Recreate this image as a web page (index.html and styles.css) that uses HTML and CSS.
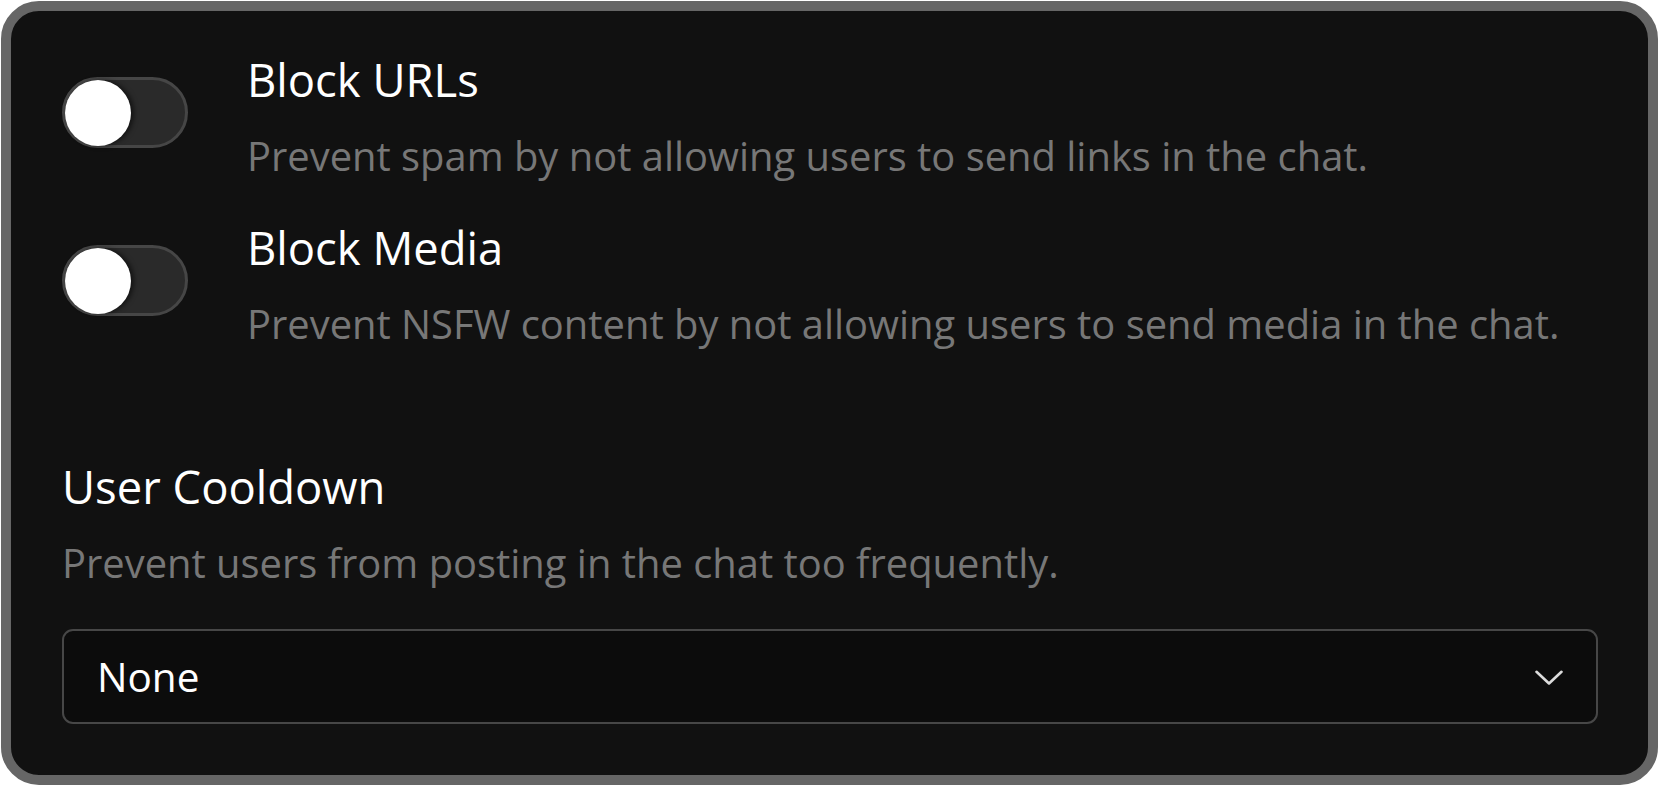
FILE: index.html
```html
<!DOCTYPE html>
<html lang="en">
<head>
<meta charset="utf-8">
<title>Chat moderation settings</title>
<link rel="stylesheet" href="styles.css">
</head>
<body>
<div class="card">
  <div class="setting-row">
    <div class="toggle" role="switch" aria-checked="false"><span class="knob"></span></div>
    <div class="setting-text">
      <div class="setting-title">Block URLs</div>
      <div class="setting-desc">Prevent spam by not allowing users to send links in the chat.</div>
    </div>
  </div>
  <div class="setting-row">
    <div class="toggle" role="switch" aria-checked="false"><span class="knob"></span></div>
    <div class="setting-text">
      <div class="setting-title">Block Media</div>
      <div class="setting-desc">Prevent NSFW content by not allowing users to send media in the chat.</div>
    </div>
  </div>
  <div class="section">
    <div class="setting-title">User Cooldown</div>
    <div class="setting-desc">Prevent users from posting in the chat too frequently.</div>
    <div class="select">
      <span class="select-value">None</span>
      <svg class="chevron" width="28" height="16" viewBox="0 0 28 16" aria-hidden="true">
        <path d="M1.5 1.8 L14 13.5 L26.5 1.8" fill="none" stroke="#dcdcdc" stroke-width="2.6" stroke-linecap="round" stroke-linejoin="round"/>
      </svg>
    </div>
  </div>
</div>
</body>
</html>
```

FILE: styles.css
```css
html, body {
  margin: 0;
  padding: 0;
  background: #ffffff;
}

body {
  padding: 1px;
  font-family: "Open Sans", "Noto Sans", "Liberation Sans", sans-serif;
}

.card {
  box-sizing: border-box;
  width: 1657px;
  height: 784px;
  background: #111111;
  border: 10px solid #666666;
  border-radius: 38px;
  padding: 38px 50px 0 51px;
  display: flex;
  flex-direction: column;
}

.setting-row {
  display: flex;
  align-items: flex-start;
  gap: 59px;
}

.setting-row + .setting-row {
  margin-top: 34px;
}

.toggle {
  box-sizing: border-box;
  flex: 0 0 auto;
  width: 126px;
  height: 71px;
  margin-top: 28px;
  border-radius: 36px;
  border: 3px solid #464646;
  background: #2a2a2a;
  padding: 0;
  display: flex;
  align-items: center;
}

.knob {
  width: 66px;
  height: 66px;
  border-radius: 50%;
  background: #ffffff;
  box-shadow: 3px 0 5px rgba(0, 0, 0, 0.55);
}

.setting-title {
  font-size: 45.4px;
  line-height: 61px;
  color: #ffffff;
}

.setting-desc {
  font-size: 39.9px;
  line-height: 54px;
  color: #777777;
  margin-top: 19px;
}

.section {
  margin-top: 105px;
  display: flex;
  flex-direction: column;
}

.select {
  box-sizing: border-box;
  margin-top: 39px;
  height: 95px;
  border: 2px solid #474747;
  border-radius: 11px;
  background: #0c0c0c;
  display: flex;
  align-items: center;
  justify-content: space-between;
  padding: 0 33px 0 33px;
}

.select-value {
  font-size: 40.5px;
  line-height: 91px;
  color: #ffffff;
}

.chevron {
  display: block;
  margin-top: 2px;
}
```
